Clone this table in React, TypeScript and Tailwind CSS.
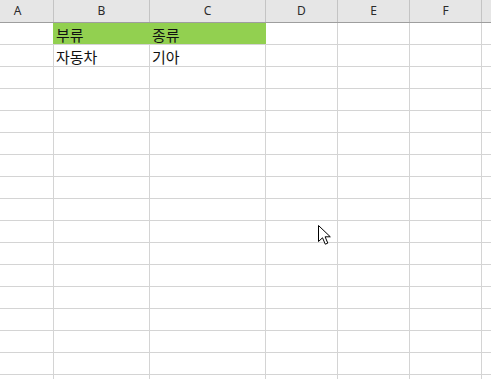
import React from "react";

type Col = { key: string; w: string };

// Column widths include the 1px right gridline; column A is scrolled partly out of view.
const cols: Col[] = [
  { key: "A", w: "w-[72px] -ml-[18px]" },
  { key: "B", w: "w-[96px]" },
  { key: "C", w: "w-[116px]" },
  { key: "D", w: "w-[72px]" },
  { key: "E", w: "w-[72px]" },
  { key: "F", w: "w-[72px]" },
  { key: "G", w: "w-[72px]" },
];

const data: Record<number, Record<string, string>> = {
  1: { B: "부류", C: "종류" },
  2: { B: "자동차", C: "기아" },
};

function Cursor() {
  return (
    <svg
      className="absolute left-[318px] top-[225px]"
      width="14"
      height="22"
      viewBox="0 0 14 22"
    >
      <path
        d="M0.5 0.5 L0.5 16.5 L4.5 12.8 L7.3 19.2 L9.8 18.1 L7.1 11.8 L12.3 11.8 Z"
        fill="#ffffff"
        stroke="#000000"
        strokeWidth="1"
        strokeLinejoin="miter"
      />
    </svg>
  );
}

export default function App() {
  const rows = Array.from({ length: 17 }, (_, i) => i + 1);
  return (
    <div className="relative w-[491px] h-[379px] overflow-hidden bg-white">
      {/* column header strip */}
      <div className="flex h-[23px] bg-[#e6e6e6] border-b border-[#9e9e9e]">
        {cols.map((c) => (
          <div
            key={c.key}
            className={`${c.w} shrink-0 h-full border-r border-[#c4c4c4] flex items-center justify-center text-[12px] leading-none text-[#2b2b2b] pb-[1px]`}
            style={{ fontFamily: '"Noto Sans", "Liberation Sans", sans-serif' }}
          >
            {c.key === "G" ? "" : c.key}
          </div>
        ))}
      </div>

      {rows.map((r) => (
        <div key={r} className="flex h-[22px] border-b border-[#d4d4d4]">
          {cols.map((c) => {
            const filled = r === 1 && (c.key === "B" || c.key === "C");
            const edge = r === 1 && c.key === "A";
            return (
              <div
                key={c.key}
                className={`${c.w} shrink-0 h-full border-r ${
                  filled || edge ? "border-[#92d050]" : "border-[#d4d4d4]"
                } ${filled ? "bg-[#92d050]" : ""} flex items-center pl-[2px] pt-[1px] text-[15px] leading-none text-[#111]`}
                style={{
                  fontFamily:
                    '"Noto Sans CJK KR", "Noto Sans", sans-serif',
                }}
              >
                {data[r]?.[c.key] ?? ""}
              </div>
            );
          })}
        </div>
      ))}

      <Cursor />
    </div>
  );
}
